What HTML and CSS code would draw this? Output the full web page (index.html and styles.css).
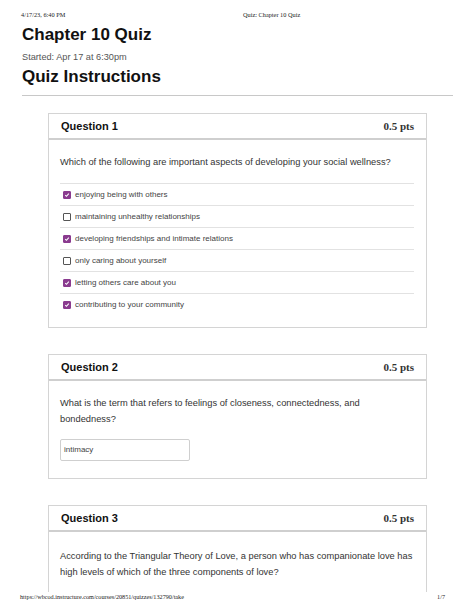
FILE: index.html
```html
<!DOCTYPE html>
<html lang="en">
<head>
    <meta charset="UTF-8">
    <meta name="viewport" content="width=device-width, initial-scale=1.0">
    <title>Quiz: Chapter 10 Quiz</title>
    <link rel="stylesheet" href="styles.css">
</head>
<body>
<div class="page">
    <!-- Print header -->
    <div class="print-head">
        <span class="print-date">4/17/23, 6:40 PM</span>
        <span class="print-title">Quiz: Chapter 10 Quiz</span>
    </div>

    <div class="sheet">
        <h1 class="quiz-title">Chapter 10 Quiz</h1>
        <div class="started">Started: Apr 17 at 6:30pm</div>
        <h2 class="instructions">Quiz Instructions</h2>
        <hr class="rule">

        <!-- Question 1 -->
        <div class="question">
            <div class="q-head">
                <span class="q-name">Question 1</span>
                <span class="q-pts">0.5 pts</span>
            </div>
            <div class="q-body">
                <p class="q-text">Which of the following are important aspects of developing your social wellness?</p>
                <ul class="answers">
                    <li class="answer"><span class="check on"><svg viewBox="0 0 8 8"><path d="M1.6 4.2 L3.3 5.8 L6.4 2.2" fill="none" stroke="#fff" stroke-width="1.4"/></svg></span>enjoying being with others</li>
                    <li class="answer"><span class="check"></span>maintaining unhealthy relationships</li>
                    <li class="answer"><span class="check on"><svg viewBox="0 0 8 8"><path d="M1.6 4.2 L3.3 5.8 L6.4 2.2" fill="none" stroke="#fff" stroke-width="1.4"/></svg></span>developing friendships and intimate relations</li>
                    <li class="answer"><span class="check"></span>only caring about yourself</li>
                    <li class="answer"><span class="check on"><svg viewBox="0 0 8 8"><path d="M1.6 4.2 L3.3 5.8 L6.4 2.2" fill="none" stroke="#fff" stroke-width="1.4"/></svg></span>letting others care about you</li>
                    <li class="answer"><span class="check on"><svg viewBox="0 0 8 8"><path d="M1.6 4.2 L3.3 5.8 L6.4 2.2" fill="none" stroke="#fff" stroke-width="1.4"/></svg></span>contributing to your community</li>
                </ul>
            </div>
        </div>

        <!-- Question 2 -->
        <div class="question">
            <div class="q-head">
                <span class="q-name">Question 2</span>
                <span class="q-pts">0.5 pts</span>
            </div>
            <div class="q-body">
                <p class="q-text">What is the term that refers to feelings of closeness, connectedness, and<br>bondedness?</p>
                <div class="short-answer">intimacy</div>
            </div>
        </div>

        <!-- Question 3 -->
        <div class="question">
            <div class="q-head">
                <span class="q-name">Question 3</span>
                <span class="q-pts">0.5 pts</span>
            </div>
            <div class="q-body tall">
                <p class="q-text">According to the Triangular Theory of Love, a person who has companionate love has high levels of which of the three components of love?</p>
            </div>
        </div>
    </div>

    <!-- Print footer -->
    <div class="print-foot">
        <span>https://wbcod.instructure.com/courses/20851/quizzes/132790/take</span>
        <span>1/7</span>
    </div>
</div>
</body>
</html>
```

FILE: styles.css
```css
body {
    margin: 0;
    background-color: #ffffff;
    overflow: hidden;
}
.page {
    display: flex;
    flex-direction: column;
    height: 613px;
}

/* Print header / footer */
.print-head {
    display: flex;
    padding: 10px 21px 0 21px;
    height: 10px;
    line-height: 10px;
    font-family: 'Liberation Serif', serif;
    font-size: 6.3px;
    color: #222;
}
.print-date {
    width: 222px;
}
.print-foot {
    display: flex;
    justify-content: space-between;
    padding: 0 29px 0 20px;
    height: 21px;
    line-height: 10px;
    font-family: 'Liberation Serif', serif;
    font-size: 6.2px;
    color: #222;
}

.sheet {
    flex: 1;
    overflow: hidden;
    padding: 0 21px 0 22px;
    font-family: 'Liberation Sans', Arial, sans-serif;
}
.quiz-title {
    margin: 5px 0 0 0;
    font-size: 17px;
    line-height: 20px;
    font-weight: bold;
    color: #111;
}
.started {
    margin-top: 6px;
    font-size: 9.2px;
    line-height: 12px;
    color: #555;
}
.instructions {
    margin: 4px 0 0 0;
    font-size: 17px;
    line-height: 20px;
    font-weight: bold;
    color: #111;
}
.rule {
    margin: 8px 0 0 0;
    border: none;
    border-top: 1px solid #c8c8c8;
}

/* Question cards */
.question {
    margin: 17px 26px 0 26px;
    border: 1px solid #d4d4d4;
}
.question + .question {
    margin-top: 26px;
}
.q-head {
    display: flex;
    justify-content: space-between;
    align-items: center;
    height: 24px;
    padding: 0 12px;
    border-bottom: 2px solid #cfcfcf;
}
.q-name {
    font-size: 11px;
    font-weight: bold;
    color: #111;
}
.q-pts {
    font-family: 'Liberation Serif', serif;
    font-size: 11px;
    font-weight: bold;
    color: #333;
}
.q-body {
    padding: 14px 12px 12px 11px;
}
.q-body.tall {
    padding-top: 16px;
    min-height: 120px;
}
.q-text {
    margin: 0;
    font-size: 9.3px;
    line-height: 16px;
    color: #333;
}

.answers {
    list-style: none;
    margin: 13px 0 0 0;
    padding: 0;
}
.answer {
    display: flex;
    align-items: center;
    height: 21px;
    border-top: 1px solid #e2e2e2;
    font-size: 8px;
    color: #444;
}
.check {
    display: inline-block;
    box-sizing: border-box;
    width: 8px;
    height: 8px;
    margin: 0 4px 0 3px;
    border: 1px solid #555;
    border-radius: 1px;
    background-color: #fff;
}
.check.on {
    border-color: #8a3b8f;
    background-color: #8a3b8f;
}
.check svg {
    display: block;
    width: 6px;
    height: 6px;
}

.short-answer {
    box-sizing: border-box;
    width: 130px;
    height: 22px;
    margin: 12px 0 5px 0;
    padding: 0 3px;
    border: 1px solid #cfcfcf;
    border-radius: 2px;
    font-size: 8px;
    line-height: 20px;
    color: #444;
}
```
